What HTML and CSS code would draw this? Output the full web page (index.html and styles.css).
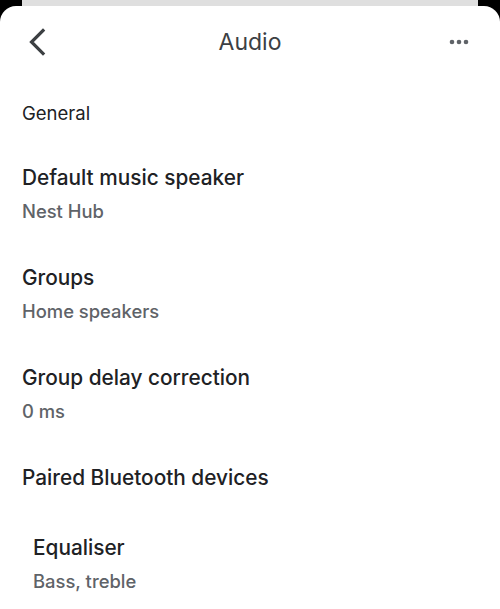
FILE: index.html
```html
<!DOCTYPE html>
<html>
<head>
<meta charset="utf-8">
<link rel="stylesheet" href="styles.css">
</head>
<body>
<div class="backcard"></div>
<div class="sheet">
  <header class="header">
    <svg class="back" width="20" height="28" viewBox="0 0 20 28"><path d="M16 2.5 L4.5 14 L16 25.5" fill="none" stroke="#3c4043" stroke-width="3.2" stroke-linecap="square"/></svg>
    <div class="title">Audio</div>
    <svg class="more" width="20" height="6" viewBox="0 0 20 6"><circle cx="3" cy="3" r="2.3" fill="#5f6368"/><circle cx="10" cy="3" r="2.3" fill="#5f6368"/><circle cx="17" cy="3" r="2.3" fill="#5f6368"/></svg>
  </header>
  <div class="section">General</div>
  <div class="item item-first">
    <div class="item-title">Default music speaker</div>
    <div class="item-sub">Nest Hub</div>
  </div>
  <div class="item">
    <div class="item-title">Groups</div>
    <div class="item-sub">Home speakers</div>
  </div>
  <div class="item">
    <div class="item-title">Group delay correction</div>
    <div class="item-sub">0 ms</div>
  </div>
  <div class="item">
    <div class="item-title">Paired Bluetooth devices</div>
  </div>
  <div class="item item-indent">
    <div class="item-title">Equaliser</div>
    <div class="item-sub">Bass, treble</div>
  </div>
</div>
</body>
</html>
```
FILE: styles.css
```css
html, body {
  margin: 0;
  padding: 0;
  background: #000;
  height: 100%;
  overflow: hidden;
}
body {
  font-family: Inter, Roboto, "Liberation Sans", sans-serif;
}
.backcard {
  height: 6px;
  margin: 0 22px;
  background: #dfdfdf;
}
.sheet {
  background: #fff;
  border-radius: 16px 16px 0 0;
  height: 603px;
}
.header {
  height: 72px;
  display: flex;
  align-items: center;
  justify-content: space-between;
  padding: 0 31px 0 27px;
  position: relative;
}
.back,
.more {
  display: block;
}
.title {
  position: absolute;
  left: 0;
  right: 0;
  top: 22px;
  text-align: center;
  font-size: 23px;
  line-height: 28px;
  color: #3c4043;
}
.section {
  margin: 23px 0 0 22px;
  font-size: 18.5px;
  line-height: 24px;
  color: #202124;
}
.item {
  box-sizing: border-box;
  height: 100px;
  padding: 39px 0 0 22px;
}
.item.item-first {
  height: 61px;
  padding-top: 0;
  margin-top: 39px;
}
.item-title {
  font-size: 20.8px;
  font-weight: 500;
  line-height: 28px;
  color: #202124;
}
.item-sub {
  margin-top: 7px;
  font-size: 18.4px;
  font-weight: 500;
  line-height: 24px;
  color: #5f6368;
}
.item.item-indent {
  height: 109px;
  padding: 9px 0 0 33px;
}
```
